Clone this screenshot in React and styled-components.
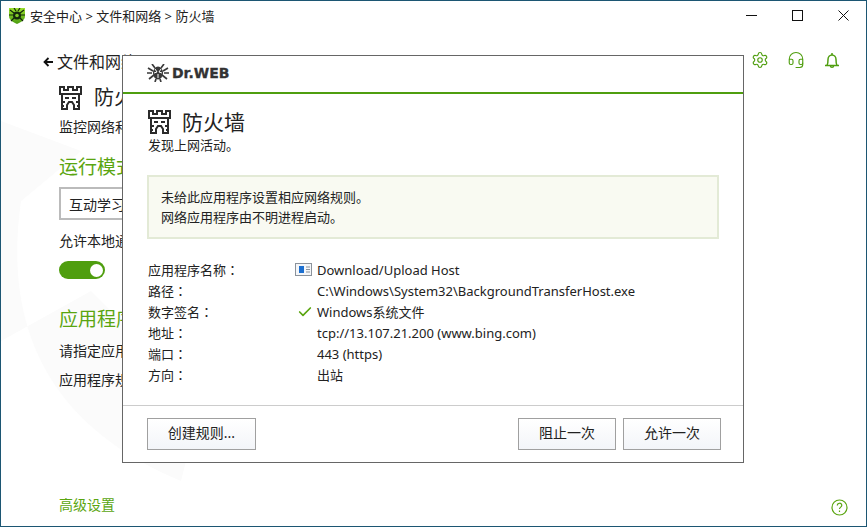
import { Fragment } from 'react'
import styled, { createGlobalStyle } from 'styled-components'
import { Check, Settings, Headset } from 'lucide-react'

const GlobalStyle = createGlobalStyle`
    html, body {
        margin:0;
        padding:0;
        background:#fff;
    }
    body {
        font-family:"Noto Sans", "Noto Sans CJK SC", sans-serif;
        font-size:13px;
        color:#222;
    }
    * {
        box-sizing:border-box;
    }
`

const colors = {
    green: '#5aa510',
    line: '#4f9e0f',
}

const Window = styled.div`
    position:relative;
    width:867px;
    height:527px;
    border:1px solid #1c5673;
    background:#fff;
    overflow:hidden;
    display:flex;
    flex-direction:column;
`
const Watermark = styled.svg`
    position:absolute;
    left:0;
    top:100px;
    width:400px;
    height:400px;
`
const TitleBar = styled.div`
    position:relative;
    height:30px;
    flex-shrink:0;
    display:flex;
    align-items:center;
    padding-left:8px;
    gap:5px;
`
const Crumbs = styled.span`
    font-size:13px;
    line-height:18px;
`
const WindowButtons = styled.div`
    margin-left:auto;
    display:flex;
    align-items:center;
    gap:35px;
    padding:0 17px 2px 0;
    color:#111;
`
const Main = styled.div`
    position:relative;
    flex:1;
    display:flex;
    flex-direction:column;
    padding:0 0 0 58px;
`
const Back = styled.div`
    margin:19px 0 0 -16px;
    display:flex;
    align-items:center;
    gap:4px;
    font-size:16px;
    line-height:24px;
`
const PageHead = styled.div`
    display:flex;
    align-items:center;
    gap:12px;
    margin-top:11px;
    font-size:20px;
    line-height:26px;
`
const PageText = styled.p`
    margin:${({ $top }) => $top}px 0 0;
    font-size:14px;
    line-height:18px;
`
const Heading = styled.h2`
    margin:${({ $top }) => $top}px 0 0;
    font-size:19px;
    line-height:24px;
    font-weight:400;
    color:${colors.green};
`
const Select = styled.div`
    margin-top:8px;
    width:180px;
    height:33px;
    border:2px solid #bbb;
    background:#fff;
    display:flex;
    align-items:center;
    padding-left:8px;
    font-size:14px;
`
const Toggle = styled.div`
    margin-top:11px;
    width:46px;
    height:18px;
    border-radius:9px;
    background:${colors.line};
    display:flex;
    align-items:center;
    justify-content:flex-end;
    padding-right:2px;
`
const Knob = styled.span`
    width:13px;
    height:13px;
    border-radius:50%;
    background:#fff;
`
const ToolIcons = styled.div`
    position:absolute;
    top:20px;
    right:25px;
    display:flex;
    gap:18px;
    color:${colors.line};
`
const Footer = styled.div`
    position:absolute;
    left:58px;
    right:18px;
    bottom:10px;
    display:flex;
    align-items:flex-end;
    justify-content:space-between;
    color:${colors.green};
`
const FooterLink = styled.span`
    font-size:14px;
    line-height:18px;
    padding-bottom:2px;
`
const Dialog = styled.div`
    position:absolute;
    left:121px;
    top:54px;
    width:622px;
    height:408px;
    border:1px solid #666;
    background:#fff;
    display:flex;
    flex-direction:column;
`
const DialogLogo = styled.div`
    height:36px;
    flex-shrink:0;
    display:flex;
    align-items:center;
    gap:3px;
    padding:0 0 2px 24px;
`
const LogoText = styled.span`
    font-family:"DejaVu Sans", sans-serif;
    font-weight:700;
    font-size:14px;
    -webkit-text-stroke:0.300px #333;
    color:#333;
`
const GreenLine = styled.div`
    height:2px;
    flex-shrink:0;
    background:${colors.line};
`
const DialogBody = styled.div`
    flex:1;
    padding:15px 23px 0 25px;
`
const DialogHead = styled.div`
    display:flex;
    align-items:center;
    gap:11px;
    font-size:21px;
    line-height:26px;
`
const Notice = styled.div`
    margin:21px 0 0 -1px;
    width:572px;
    height:64px;
    padding:10px 12px;
    border:2px solid #e3ead6;
    background:#f9faf2;
    line-height:20px;
`
const Details = styled.div`
    margin-top:20px;
    display:grid;
    grid-template-columns:147px 22px 1fr;
    grid-auto-rows:21px;
    align-items:center;
`
const Mark = styled.span`
    display:flex;
    align-items:center;
`
const CheckMark = styled(Check)`
    margin-left:2px;
`
const Colon = styled.span`
    font-family:"Noto Sans CJK TC", sans-serif;
`
const DialogFooter = styled.div`
    height:57px;
    flex-shrink:0;
    border-top:1px solid #ccc;
    display:flex;
    align-items:flex-start;
    padding:12px 22px 0 24px;
    gap:7px;
`
const Button = styled.button`
    width:${({ $width }) => $width}px;
    height:32px;
    border:1px solid #a0a0a0;
    background:linear-gradient(#fff, #f3f5f9);
    font:inherit;
    font-size:14px;
    line-height:28px;
    color:#222;
    padding:0 0 2px;
    margin-left:${({ $push }) => ($push ? 'auto' : '0')};
`

const FortIcon = () => (
    <svg width="23" height="24" viewBox="0 0 23 24" fill="none" stroke="#2b2b2b" strokeWidth="2">
        <path d="M1 1h4v3h4V1h5v3h4V1h4v7H1z" />
        <path d="M3 8v15h5v-4l2-3h3l2 3v4h5V8" />
        <path d="M6 12h4M13 12h4M3 16h3M17 16h3M3 20h2M18 20h2" />
    </svg>
)

const ShieldIcon = () => (
    <svg width="16" height="16" viewBox="0 0 16 16">
        <defs>
            <linearGradient id="shieldFill" x1="0" y1="0" x2="0" y2="1">
                <stop offset="0" stopColor="#9be22e" />
                <stop offset="1" stopColor="#4b9c12" />
            </linearGradient>
        </defs>
        <path d="M0 0h16v8c0 4-4 6-8 8-4-2-8-4-8-8z" fill="url(#shieldFill)" />
        <path d="M1 2l4 3M15 2l-4 3M0 7h4M16 7h-4M2 13l3-3M14 13l-3-3M5 0l2 3M11 0L9 3" stroke="#14280c" strokeWidth="1.200" />
        <circle cx="8" cy="7.500" r="4" fill="#14280c" />
        <circle cx="8" cy="7.500" r="1.800" fill="#7fc825" />
    </svg>
)

const SpiderIcon = () => (
    <svg width="22" height="18" viewBox="0 0 22 18">
        <path d="M1 4l5 3M21 4l-5 3M0 9h5M22 9h-5M2 15l5-4M20 15l-5-4M5 0l3 4M17 0l-3 4M9 15l-1 3M13 15l1 3" stroke="#3a3a3a" strokeWidth="1.700" fill="none" />
        <ellipse cx="11" cy="9" rx="5" ry="6.500" fill="#3a3a3a" />
        <path d="M8 5l2 3-3 1M14 5l-2 3 3 1M11 10v4" stroke="#fff" strokeWidth="1" fill="none" />
    </svg>
)

const AppIcon = () => (
    <svg width="17" height="13" viewBox="0 0 17 13">
        <rect x="0.500" y="0.500" width="16" height="12" fill="#f4f6f9" stroke="#8b929b" />
        <rect x="4" y="3" width="5" height="7" fill="#1c6fd0" />
        <path d="M11 4h4M11 6.500h4M11 9h4" stroke="#8b929b" />
    </svg>
)

const HelpIcon = () => (
    <svg width="17" height="17" viewBox="0 0 17 17" fill="none" stroke="#5aa510" strokeWidth="1.200">
        <circle cx="8.500" cy="8.500" r="7.500" />
        <path d="M6.300 6.500c0-3 4.500-3 4.500-.2 0 1.800-2.300 1.800-2.300 3.700" />
        <path d="M8.500 11.500v1.500" />
    </svg>
)

const BackArrow = () => (
    <svg width="10" height="10" viewBox="0 0 10 10" fill="none" stroke="#111" strokeWidth="1.800">
        <path d="M10 5H2M5.500 1L1.500 5l4 4" />
    </svg>
)

const MinimizeIcon = () => (
    <svg width="11" height="11" viewBox="0 0 11 11" stroke="#111">
        <path d="M0 5.500h11" />
    </svg>
)

const MaximizeIcon = () => (
    <svg width="11" height="11" viewBox="0 0 11 11" fill="none" stroke="#111">
        <rect x="0.500" y="0.500" width="10" height="10" />
    </svg>
)

const CloseIcon = () => (
    <svg width="11" height="11" viewBox="0 0 11 11" stroke="#111">
        <path d="M0.500 0.500l10 10M10.500 0.500l-10 10" />
    </svg>
)

const BellIcon = () => (
    <svg width="18" height="18" viewBox="0 0 18 18" fill="none" stroke={colors.line} strokeWidth="1.500">
        <path d="M2 14.500h14M4 14.500c1-1.500 1-3 1-6 0-2.500 1.800-4.500 4-4.500s4 2 4 4.500c0 3 0 4.500 1 6" />
        <path d="M9 2v2M7.500 15c0 1.800 3 1.800 3 0" />
    </svg>
)

const details = [
    { label: '应用程序名称', icon: <AppIcon />, value: 'Download/Upload Host' },
    { label: '路径', value: 'C:\\Windows\\System32\\BackgroundTransferHost.exe' },
    { label: '数字签名', icon: <CheckMark size={16} color="#5aa510" strokeWidth={2.500} />, value: 'Windows系统文件' },
    { label: '地址', value: 'tcp://13.107.21.200 (www.bing.com)' },
    { label: '端口', value: '443 (https)' },
    { label: '方向', value: '出站' },
]

const App = () => {
    return (
        <>
            <GlobalStyle />
            <Window>
                <Watermark viewBox="0 0 400 400">
                    <path d="M0 20L80 50 20 100C0 240 60 330 180 380L200 300 90 190 0 240z" fill="#fbfbfb" />
                </Watermark>
                <TitleBar>
                    <ShieldIcon />
                    <Crumbs>安全中心 &gt; 文件和网络 &gt; 防火墙</Crumbs>
                    <WindowButtons>
                        <MinimizeIcon />
                        <MaximizeIcon />
                        <CloseIcon />
                    </WindowButtons>
                </TitleBar>
                <Main>
                    <Back><BackArrow />文件和网络</Back>
                    <PageHead><FortIcon />防火墙</PageHead>
                    <PageText $top={7}>监控网络和</PageText>
                    <Heading $top={19}>运行模式</Heading>
                    <Select>互动学习</Select>
                    <PageText $top={12}>允许本地通</PageText>
                    <Toggle><Knob /></Toggle>
                    <Heading $top={28}>应用程序</Heading>
                    <PageText $top={11}>请指定应用</PageText>
                    <PageText $top={11}>应用程序规</PageText>
                    <ToolIcons>
                        <Settings size={18} strokeWidth={1.500} />
                        <Headset size={18} strokeWidth={1.500} />
                        <BellIcon />
                    </ToolIcons>
                    <Footer>
                        <FooterLink>高级设置</FooterLink>
                        <HelpIcon />
                    </Footer>
                </Main>
                <Dialog>
                    <DialogLogo>
                        <SpiderIcon />
                        <LogoText>Dr.WEB</LogoText>
                    </DialogLogo>
                    <GreenLine />
                    <DialogBody>
                        <DialogHead><FortIcon />防火墙</DialogHead>
                        <div>发现上网活动。</div>
                        <Notice>
                            未给此应用程序设置相应网络规则。<br />
                            网络应用程序由不明进程启动。
                        </Notice>
                        <Details>
                            {details.map(row => (
                                <Fragment key={row.label}>
                                    <span>{row.label}<Colon>：</Colon></span>
                                    <Mark>{row.icon}</Mark>
                                    <span>{row.value}</span>
                                </Fragment>
                            ))}
                        </Details>
                    </DialogBody>
                    <DialogFooter>
                        <Button $width={109}>创建规则...</Button>
                        <Button $width={98} $push>阻止一次</Button>
                        <Button $width={98}>允许一次</Button>
                    </DialogFooter>
                </Dialog>
            </Window>
        </>
    )
}

export default App
